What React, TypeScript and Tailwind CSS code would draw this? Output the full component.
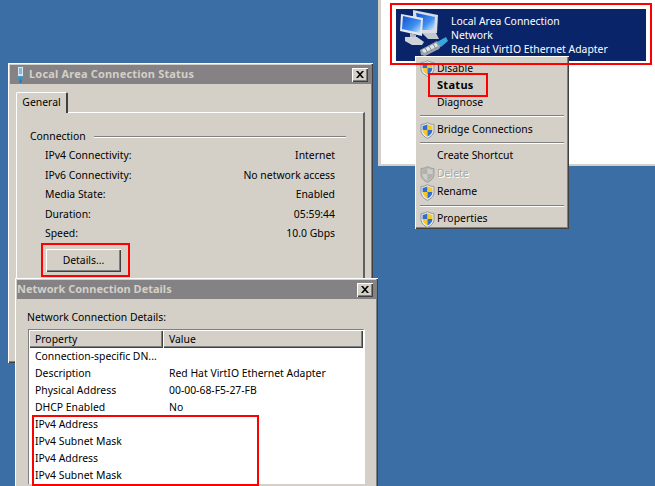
import React from "react";

const FONT = "font-['Noto_Sans',sans-serif] text-[10.4px]";
const raised = "shadow-[inset_1px_1px_0_#ffffff,inset_-1px_-1px_0_#404040,inset_-2px_-2px_0_#808080]";

function Shield({ grey = false }: { grey?: boolean }) {
  const a = grey ? "#b4b2ae" : "#2f6fd0";
  const b = grey ? "#cfcdc8" : "#f6c927";
  return (
    <svg width="15" height="17" viewBox="0 0 15 17" className="shrink-0">
      <path d="M7.5 0.6 C5.5 2 3 2.4 1 2.5 V8.5 C1 12 4 14.8 7.5 16.3 C11 14.8 14 12 14 8.5 V2.5 C12 2.4 9.5 2 7.5 0.6 Z" fill={grey ? "#bdbbb6" : "#e8e8e8"} stroke={grey ? "#a09e9a" : "#8c96a6"} strokeWidth="1" />
      <path d="M7.5 2.2 C6 3.2 4.2 3.6 2.6 3.8 V8 H7.5 Z" fill={a} />
      <path d="M7.5 2.2 C9 3.2 10.8 3.6 12.4 3.8 V8 H7.5 Z" fill={b} />
      <path d="M2.6 8 H7.5 V14.6 C5 13.4 2.6 11.2 2.6 8 Z" fill={b} />
      <path d="M12.4 8 H7.5 V14.6 C10 13.4 12.4 11.2 12.4 8 Z" fill={a} />
    </svg>
  );
}

function NetIcon() {
  return (
    <svg width="55" height="52" viewBox="4 3 55 52" className="shrink-0">
      <defs>
        <linearGradient id="scr" x1="0" y1="0" x2="1" y2="1">
          <stop offset="0" stopColor="#0f4fd0" />
          <stop offset="0.6" stopColor="#3f8ff0" />
          <stop offset="1" stopColor="#d6ecff" />
        </linearGradient>
      </defs>
      <polygon points="21,4 46,9 45,27 27,27 21,20" fill="#d8dce4" />
      <polygon points="24,7 43,11 42,24 27,24" fill="url(#scr)" />
      <polygon points="30,27 44,27 47,33 36,33" fill="#c4c8d0" />
      <polygon points="9,8 31,12 30,30 8,25" fill="#e4e7ec" />
      <polygon points="11,10 29,14 28,27 10,23" fill="url(#scr)" />
      <polygon points="18,27 24,29 24,32 18,31" fill="#b8bcc4" />
      <polygon points="13,31 25,31 32,36 30,39 20,39 13,35" fill="#d0d3d9" />
      <polygon points="28,44 45,35 49,40 47,43 33,50 29,49" fill="#9aa2aa" />
      <polygon points="30,44 44,37 46,40 32,47" fill="#dfe4e8" />
      <path d="M33 42 L36 47 M37 40 L40 45 M41 38 L44 43" stroke="#7f8890" strokeWidth="1" />
      <polygon points="45,36 54,31 56,35 49,41" fill="#38a8dc" />
    </svg>
  );
}

function Plug() {
  return (
    <svg width="9" height="17" viewBox="0 0 9 17" className="shrink-0">
      <rect x="1.5" y="0.5" width="6" height="10" rx="1" fill="#d8e4f0" stroke="#6f8aa0" />
      <rect x="3" y="2" width="3" height="6" fill="#8fb4d8" />
      <rect x="2.5" y="10.5" width="4" height="3" fill="#1e9fd8" />
      <rect x="3.5" y="13.5" width="2" height="3.5" fill="#1878c8" />
    </svg>
  );
}

function Close() {
  return (
    <div className={`flex h-[14px] w-[16px] items-center justify-center bg-[#d4d0c8] ${raised}`}>
      <svg width="8" height="7" viewBox="0 0 8 7">
        <path d="M0 0 H2 L4 2.2 L6 0 H8 L5 3.5 L8 7 H6 L4 4.8 L2 7 H0 L3 3.5 Z" fill="#000" />
      </svg>
    </div>
  );
}

function TitleBar({ title, icon, cls, textCls }: { title: string; icon?: React.ReactNode; cls: string; textCls: string }) {
  return (
    <div className={`flex h-[19px] items-center justify-between bg-[#848284] pr-[3px] ${cls}`}>
      <div className="flex items-center gap-[4px]">
        {icon}
        <span className={`font-bold text-[#d4d0c8] ${textCls}`}>{title}</span>
      </div>
      <Close />
    </div>
  );
}

function Row({ label, value }: { label: string; value: string }) {
  return (
    <div className="flex h-[19.5px] items-center justify-between">
      <span>{label}</span>
      <span>{value}</span>
    </div>
  );
}

function Sep({ cls }: { cls: string }) {
  return (
    <div className={`flex items-center px-[2px] ${cls}`}>
      <div className="h-[2px] w-full border-t border-b border-t-[#808080] border-b-white" />
    </div>
  );
}

function MenuItem({ text, shield, bold, disabled, cls }: { text: string; shield?: boolean; bold?: boolean; disabled?: boolean; cls: string }) {
  return (
    <div className={`flex items-center ${cls}`}>
      <div className="flex w-[19px] shrink-0 justify-center">{shield && <Shield grey={disabled} />}</div>
      <span className={`${bold ? "text-[11px] font-bold tracking-[0.3px]" : ""} ${disabled ? "text-[#a8a6a0] [text-shadow:1px_1px_0_#ffffff]" : "text-black"}`}>{text}</span>
    </div>
  );
}

const details: [string, string][] = [
  ["Connection-specific DN...", ""],
  ["Description", "Red Hat VirtIO Ethernet Adapter"],
  ["Physical Address", "00-00-68-F5-27-FB"],
  ["DHCP Enabled", "No"],
  ["IPv4 Address", ""],
  ["IPv4 Subnet Mask", ""],
  ["IPv4 Address", ""],
  ["IPv4 Subnet Mask", ""],
];

export default function App() {
  return (
    <div className={`relative h-[486px] w-[655px] overflow-hidden bg-[#3a6ea5] text-black ${FONT}`}>
      {/* Explorer window */}
      <div className="absolute left-[378px] top-[-4px] h-[170px] w-[290px] bg-[#d4d0c8] pb-[2px] pl-[3px]">
        <div className="h-full bg-white pl-[15px] pt-[13px]">
          <div className="flex h-[52px] w-[250px] items-center bg-[#0a246a] text-white">
            <NetIcon />
            <div className="leading-[14px]">
              <div>Local Area Connection</div>
              <div>Network</div>
              <div>Red Hat VirtIO Ethernet Adapter</div>
            </div>
          </div>
        </div>
      </div>

      {/* Context menu */}
      <div className={`absolute left-[415px] top-[56px] h-[173px] w-[154px] bg-[#d4d0c8] p-[3px] pt-[4px] ${raised}`}>
        <div className="flex flex-col">
          <MenuItem text="Disable" shield cls="h-[17px]" />
          <MenuItem text="Status" bold cls="h-[17px]" />
          <MenuItem text="Diagnose" cls="h-[17px]" />
          <Sep cls="h-[10px]" />
          <MenuItem text="Bridge Connections" shield cls="h-[18px]" />
          <Sep cls="h-[8px]" />
          <MenuItem text="Create Shortcut" cls="h-[18px]" />
          <MenuItem text="Delete" shield disabled cls="h-[18px]" />
          <MenuItem text="Rename" shield cls="h-[18px]" />
          <Sep cls="h-[9px]" />
          <MenuItem text="Properties" shield cls="h-[18px]" />
        </div>
      </div>

      {/* Status window */}
      <div className={`absolute left-[8px] top-[63px] h-[300px] w-[365px] bg-[#d4d0c8] p-[2px] ${raised}`}>
        <TitleBar title="Local Area Connection Status" icon={<Plug />} cls="pl-[6px]" textCls="text-[11px] tracking-[0.18px]" />
        <div className="px-[6px] pt-[8px]">
          <div className="relative z-10 mb-[-1px] flex h-[21px] w-[52px] items-center justify-center rounded-t-[2px] border-l border-r-2 border-t border-l-white border-r-[#404040] border-t-white bg-[#d4d0c8] pb-[1px]">
            General
          </div>
          <div className="h-[240px] w-[349px] border-l border-r-2 border-t border-l-white border-r-[#606060] border-t-white px-[13px] pt-[17px]">
            <div className="flex h-[14px] items-center">
              <span className="w-[64px] shrink-0">Connection</span>
              <div className="h-[2px] w-[252px] border-t border-b border-t-[#808080] border-b-white" />
            </div>
            <div className="ml-[15px] mt-[2.5px] w-[290px]">
              <Row label="IPv4 Connectivity:" value="Internet" />
              <Row label="IPv6 Connectivity:" value="No network access" />
              <Row label="Media State:" value="Enabled" />
              <Row label="Duration:" value="05:59:44" />
              <Row label="Speed:" value="10.0 Gbps" />
            </div>
            <div className={`ml-[16px] mt-[5px] flex h-[23px] w-[75px] items-center justify-center bg-[#d4d0c8] ${raised}`}>
              Details...
            </div>
          </div>
        </div>
      </div>

      {/* Details window */}
      <div className={`absolute left-[15px] top-[278px] h-[240px] w-[363px] bg-[#d4d0c8] p-[2px] ${raised}`}>
        <TitleBar title="Network Connection Details" cls="pl-0" textCls="text-[11px]" />
        <div className="pl-[10px] pt-[11px]">
          <div className="h-[14px] leading-[14px]">Network Connection Details:</div>
          <div className="ml-[1px] mt-[5px] w-[337px] border-l border-t border-r-2 border-[#808080] border-r-white bg-white">
            <div className="flex h-[18px]">
              <div className={`flex w-[134px] items-center bg-[#d4d0c8] pl-[6px] pt-[1px] ${raised}`}>Property</div>
              <div className={`flex flex-1 items-center bg-[#d4d0c8] pl-[6px] pt-[1px] ${raised}`}>Value</div>
            </div>
            {details.map(([p, v], i) => (
              <div key={i} className="flex h-[17px] items-center">
                <span className="w-[134px] shrink-0 whitespace-nowrap pl-[6px]">{p}</span>
                <span className="whitespace-nowrap pl-[6px]">{v}</span>
              </div>
            ))}
          </div>
        </div>
      </div>

      {/* Red annotation boxes */}
      <div className="absolute left-[390px] top-[3px] h-[62px] w-[262px] border-2 border-[#ff0000]" />
      <div className="absolute left-[428px] top-[73px] h-[24px] w-[60px] border-2 border-[#ff0000]" />
      <div className="absolute left-[41px] top-[243px] h-[34px] w-[89px] border-2 border-[#ff0000]" />
      <div className="absolute left-[32px] top-[415px] h-[71px] w-[227px] border-2 border-[#ff0000]" />
    </div>
  );
}
